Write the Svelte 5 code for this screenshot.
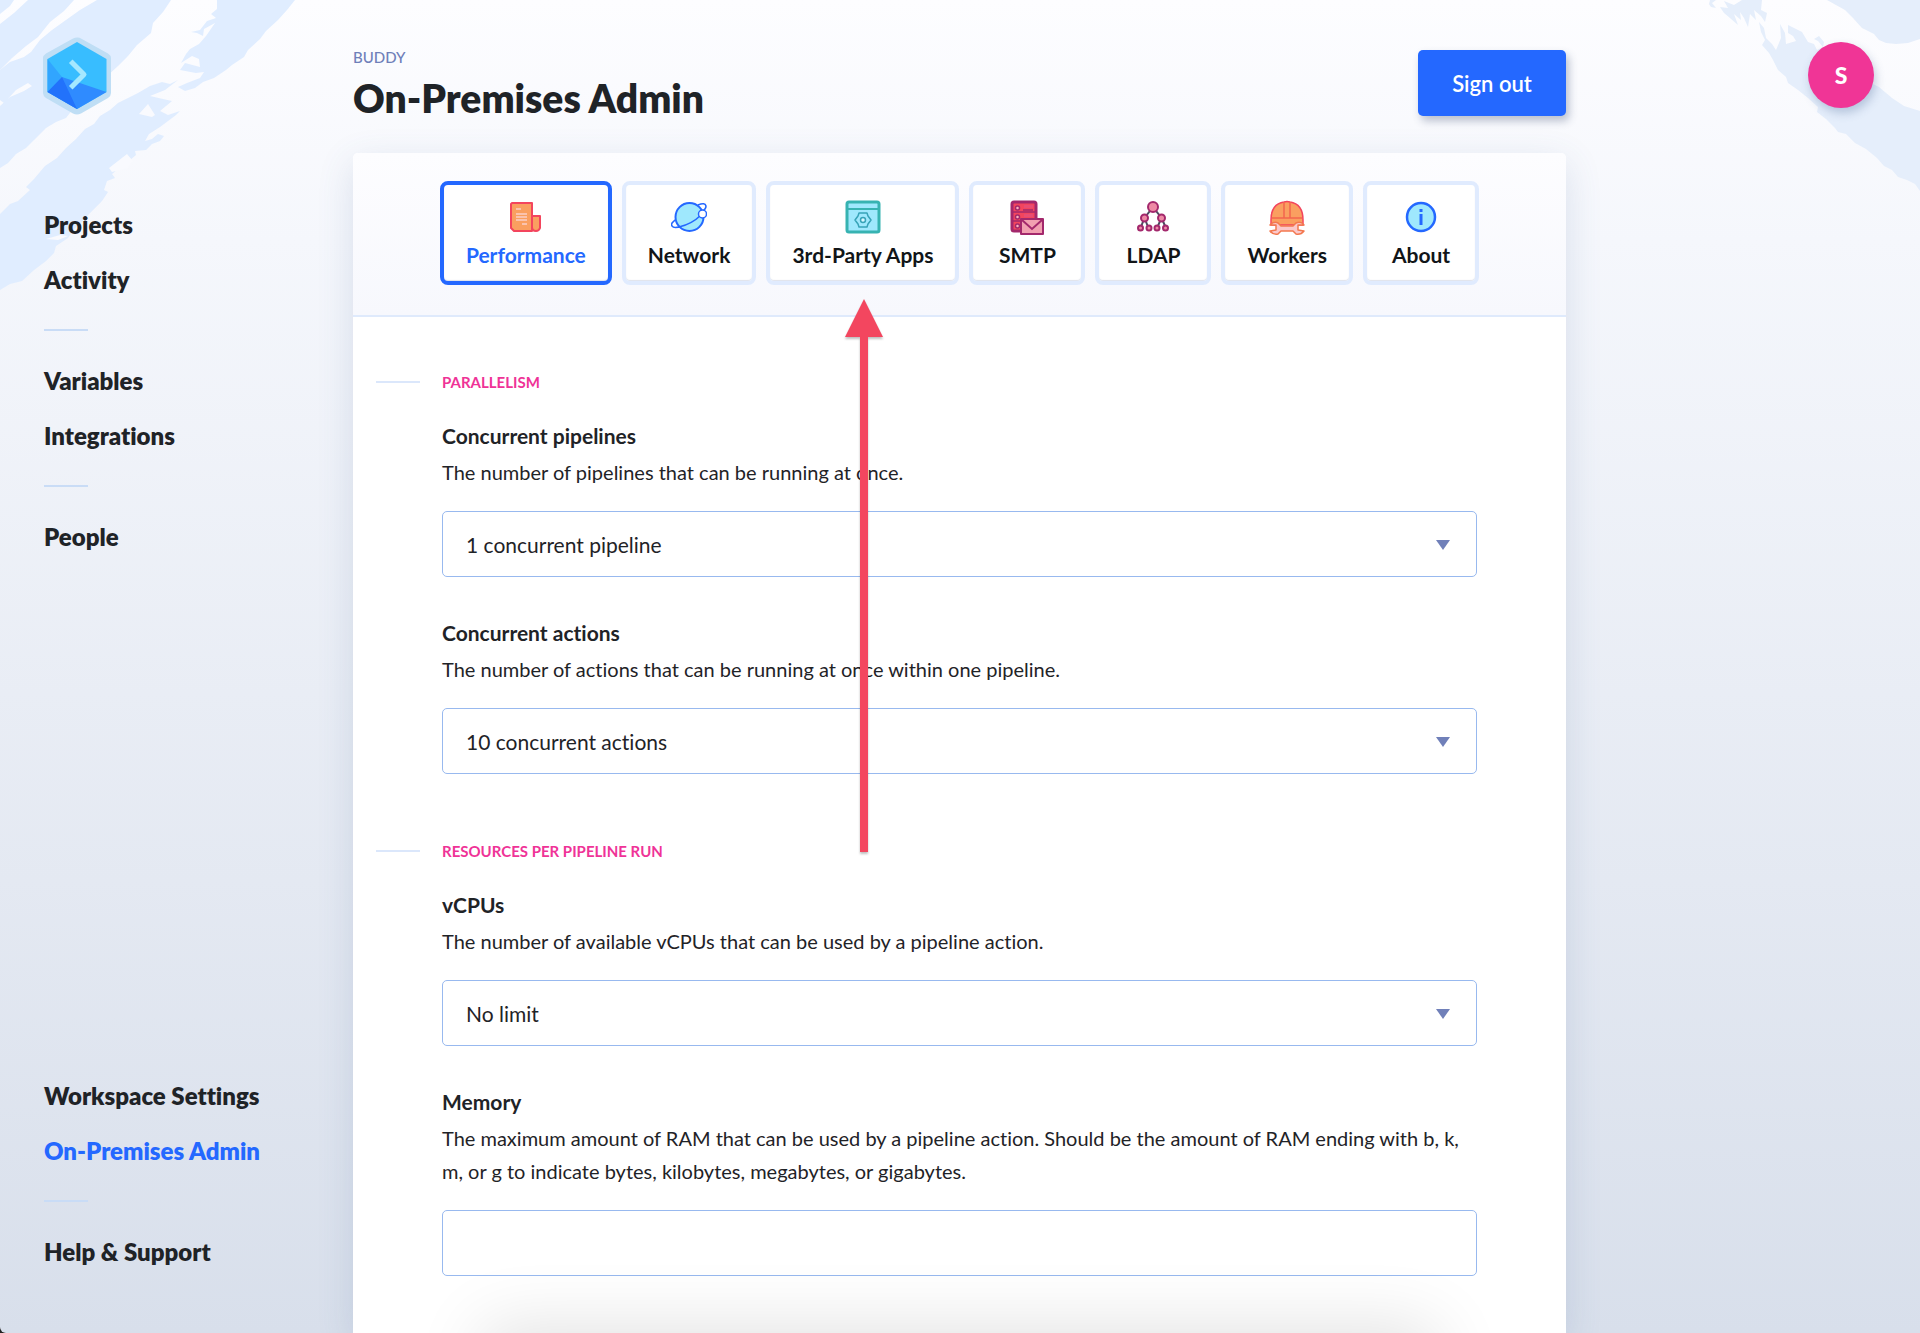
<script>
	const mainLinks = [
		['Projects', 'Activity'],
		['Variables', 'Integrations'],
		['People'],
	];

	const footLinks = [
		['Workspace Settings', 'On-Premises Admin'],
		['Help & Support'],
	];

	const tabs = ['Performance', 'Network', '3rd-Party Apps', 'SMTP', 'LDAP', 'Workers', 'About'];

	const sections = [
		{
			title: 'Parallelism',
			fields: [
				{
					id: 'pipelines',
					label: 'Concurrent pipelines',
					hint: 'The number of pipelines that can be running at once.',
					options: ['1 concurrent pipeline', '2 concurrent pipelines', '5 concurrent pipelines'],
				},
				{
					id: 'actions',
					label: 'Concurrent actions',
					hint: 'The number of actions that can be running at once within one pipeline.',
					options: ['10 concurrent actions', '20 concurrent actions'],
				},
			],
		},
		{
			title: 'Resources per pipeline run',
			fields: [
				{
					id: 'vcpus',
					label: 'vCPUs',
					hint: 'The number of available vCPUs that can be used by a pipeline action.',
					options: ['No limit', '1', '2', '4'],
				},
				{
					id: 'memory',
					label: 'Memory',
					hint: 'The maximum amount of RAM that can be used by a pipeline action. Should be the amount of RAM ending with b, k, m, or g to indicate bytes, kilobytes, megabytes, or gigabytes.',
				},
			],
		},
	];

	let activeLink = 'On-Premises Admin';
	let activeTab = 'Performance';
	let memory = '';
</script>

<div class="page">
	<svg class="brush left" viewBox="0 0 300 300" aria-hidden="true">
		<path d="M0 0H14L10 6L0 14Z" />
		<path d="M28 0H74L64 11L50 22L38 37L26 46L12 58L0 70V24L14 13Z" />
		<path d="M97 0H171L163 12L153 23L151 33L137 45L128 56L118 66L105 78L92 88L84 98L73 109L66 118L56 122L46 128L34 140L26 148L16 154L8 163L0 168V106L10 97L24 91L32 86L28 83L16 90L4 103L0 100V70L10 62L24 57L31 52L40 40L52 30L66 20L80 10Z" />
		<path d="M217 0H295L287 10L278 20L266 31L260 39L248 50L244 57L232 65L226 70L214 78L203 82L195 88L185 91L178 87L187 83L200 78L204 72L196 73L180 70L185 63L200 67L199 59L192 56L181 63L186 54L190 49L199 44L206 36L215 23L204 29L203 36L197 33L191 32L200 30L207 21L216 18L211 14L217 9Z" />
		<path d="M178 80L170 84L162 82L150 86L138 93L126 99L118 103L110 110L100 116L94 124L85 129L76 139L66 148L57 158L45 166L34 179L26 187L30 190L18 201L10 204L0 214V290L10 284L22 281L34 270L46 261L54 253L56 246L68 238L74 229L82 222L90 213L102 201L108 192L104 190L107 181L115 178L112 174L118 169L130 160L136 155L135 151L146 150L152 144L160 141L164 136L158 134L152 139L145 141L149 134L160 127L176 115L180 111L168 115L160 111L172 101L163 99L150 96L165 90Z" />
		<path class="gap" d="M148 104L155 115L152 117L139 114ZM127 154L133 161L128 168L112 172L109 168ZM46 239L60 235L68 236L58 240Z" />
	</svg>

	<svg class="brush right" viewBox="0 0 216 200" aria-hidden="true">
		<path d="M123 0H216V39L204 43L192 44L182 43L175 40L170 34L158 28L149 18L141 10L132 5Z" />
		<path d="M38 0H58L57 10L63 13L61 22L57 16L50 10L52 20L46 14L44 27L40 18L36 12L37 20L30 14L34 25L26 18L20 13L16 7L24 8L20 1L30 5ZM6 0H12L8 3L12 8L7 7L5 4Z" />
		<path d="M55 22L60 28L62 38L68 44L72 50L77 38L76 24L81 33L82 44L92 41L89 36L84 33V25L98 32L104 42L110 44L113 50L119 47L114 41L110 39L115 36L120 42L118 51L130 62L150 75L175 87L188 98L200 106L216 111V191L211 184L203 180L194 177L188 170L180 166L173 158L162 149L151 143L142 134L134 132L131 128L122 119L113 112L114 107L104 98L94 90L84 83L82 77L74 70L69 60L65 53L58 45L61 40L57 32Z" />
	</svg>

	<aside class="sidebar">
		<a class="logo" href="#home" aria-label="Buddy">
			<svg viewBox="0 0 70 80">
				<path d="M35 1.500Q37 1 39 2.500L66 17.500Q69 19.500 69 22V57Q69 60 66 62L39 77.500Q35 79.500 31 77.500L4 62Q1 60 1 57V22Q1 19.500 4 17.500L31 2.500Q33 1.500 35 1.500Z" fill="#bfdef5" />
				<path d="M35 6L64.500 23V56L35 73L5.500 56V23Z" fill="#38bdff" />
				<path d="M5.500 23L20 41L5.500 56Z" fill="#31a5ff" />
				<path d="M20 41L64.500 56L35 73L5.500 56Z" fill="#2f8bff" />
				<path d="M20 41L35 73L5.500 56Z" fill="#2272fb" />
				<path d="M30.500 27L42 38.500L30.500 50" fill="none" stroke="#a5e8ff" stroke-width="5" stroke-linecap="square" stroke-linejoin="round" />
			</svg>
		</a>

		<nav class="menu" aria-label="Workspace">
			{#each mainLinks as group}
				<ul>
					{#each group as link}
						<li><a href="#{link}" class:active={link === activeLink}>{link}</a></li>
					{/each}
				</ul>
			{/each}
		</nav>

		<nav class="menu foot" aria-label="Settings">
			{#each footLinks as group}
				<ul>
					{#each group as link}
						<li><a href="#{link}" class:active={link === activeLink}>{link}</a></li>
					{/each}
				</ul>
			{/each}
		</nav>
	</aside>

	<main>
		<header>
			<div>
				<p class="crumb">BUDDY</p>
				<h1>On-Premises Admin</h1>
			</div>
			<button class="signout">Sign out</button>
		</header>

		<div class="card">
			<nav class="tabs" aria-label="On-Premises sections">
				{#each tabs as tab}
					<button class="tab" class:active={tab === activeTab} on:click={() => activeTab = tab}>
						<svg viewBox="0 0 36 36" aria-hidden="true">
							{#if tab === 'Performance'}
								<path d="M4 3H24V31H6L3 28V4Z" fill="#fa9f60" stroke="#f3455d" stroke-width="2" stroke-linejoin="round" />
								<path d="M24 16H32V28Q31 31 28 31Q24 31 24 27Z" fill="#fa9f60" stroke="#f3455d" stroke-width="2" stroke-linejoin="round" />
								<path d="M8 9H13M8 14H19M8 17H19M8 20H19M14 24H19" stroke="#fbd0c8" stroke-width="1.500" />
							{:else if tab === 'Network'}
								<path d="M6 19Q-1 23 1 26Q3 29 11 26M27 5Q34 2 35 6Q35 9 32 11" fill="#fff" stroke="#2468ff" stroke-width="1.500" />
								<circle cx="18.500" cy="17" r="14" fill="#9fe8fd" stroke="#2468ff" stroke-width="2" />
								<path d="M8 27Q21 24 30 15" fill="none" stroke="#2468ff" stroke-width="1.500" />
								<circle cx="31.500" cy="14" r="4" fill="#fff" stroke="#2468ff" stroke-width="1.500" />
							{:else if tab === '3rd-Party Apps'}
								<rect x="2" y="2" width="32" height="30" rx="2" fill="#9fe8fd" stroke="#37b3b2" stroke-width="3" />
								<path d="M3 9H33" stroke="#37b3b2" stroke-width="2" />
								<path d="M14 13H22L23 16L26 20L23 24L22 27H14L13 24L10 20L13 16Z" fill="none" stroke="#37a3b8" stroke-width="1.500" stroke-linejoin="round" />
								<circle cx="18" cy="20" r="2.500" fill="#d8f8ff" stroke="#37a3b8" stroke-width="1.500" />
							{:else if tab === 'SMTP'}
								<rect x="3" y="2" width="24" height="29" rx="2" fill="#f3455d" stroke="#a3286c" stroke-width="3" />
								<path d="M3 12H27M3 21H27M14 10H24M14 19H24" stroke="#a3286c" stroke-width="1.500" />
								<path d="M15 5H24V8H15ZM15 14H24V17H15Z" fill="#e94c74" />
								<g fill="#fbb3bd" stroke="#a3286c" stroke-width="1.500">
									<circle cx="8.500" cy="8" r="2" />
									<circle cx="8.500" cy="17" r="2" />
									<circle cx="8.500" cy="26" r="2" />
								</g>
								<path d="M12 19H34V34H12Z" fill="#f1a0b1" stroke="#a3286c" stroke-width="2" stroke-linejoin="round" />
								<path d="M13 20L23 29L33 20" fill="none" stroke="#a3286c" stroke-width="2" />
							{:else if tab === 'LDAP'}
								<path d="M18 7L9.500 18L5.500 28M9.500 18L13.500 28M18 7L26.500 18L22 28M26.500 18L31 28" fill="none" stroke="#4d4b60" stroke-width="2" />
								<g fill="#ee8aa5" stroke="#a3286c" stroke-width="2">
									<circle cx="18" cy="7" r="5" />
									<circle cx="9.500" cy="18" r="3.500" />
									<circle cx="26.500" cy="18" r="3.500" />
									<circle cx="5.500" cy="28" r="2.500" />
									<circle cx="14" cy="28" r="2.500" />
									<circle cx="22" cy="28" r="2.500" />
									<circle cx="30.500" cy="28" r="2.500" />
								</g>
							{:else if tab === 'Workers'}
								<path d="M2 25V20Q2 4 15 2Q18 1 21 2Q34 4 34 20V25Z" fill="#fa9f60" stroke="#f3455d" stroke-width="1.500" />
								<path d="M3 18H33M15 2V18M21 2V18" stroke="#f3654d" stroke-width="1.500" />
								<path d="M1 25L7 25V30L1 31Q4 35 9 34L12 31H24L27 34Q32 35 35 31L29 30V25L35 25Q32 21 27 23L24 26H12L9 23Q5 21 1 25Z" fill="#fbc8cb" stroke="#f3784f" stroke-width="1.500" stroke-linejoin="round" />
							{:else}
								<circle cx="18" cy="17" r="14" fill="#9fe8fd" stroke="#2468ff" stroke-width="2.500" />
								<path d="M18 9V12M18 14V25" fill="none" stroke="#2468ff" stroke-width="3" />
							{/if}
						</svg>
						{tab}
					</button>
				{/each}
			</nav>

			<form>
				{#each sections as section}
					<section>
						<h2>{section.title}</h2>
						{#each section.fields as field}
							<div class="field">
								<label for={field.id}>{field.label}</label>
								<p>{field.hint}</p>
								{#if field.options}
									<div class="select">
										<select id={field.id}>
											{#each field.options as option}
												<option>{option}</option>
											{/each}
										</select>
										<svg viewBox="0 0 14 10" aria-hidden="true"><path d="M0 0H14L7 10Z" /></svg>
									</div>
								{:else}
									<input id={field.id} type="text" bind:value={memory} />
								{/if}
							</div>
						{/each}
					</section>
				{/each}
			</form>

			<!-- points at the 3rd-Party Apps tab -->
			<svg class="arrow" viewBox="0 0 38 554" aria-hidden="true">
				<path d="M19 0L38 38H23V553H15V38H0Z" />
			</svg>
		</div>

		<div class="savebar"></div>
	</main>

	<div class="account">
		<button class="avatar" aria-label="Account">S</button>
	</div>
</div>

<style>
	:global(body) {
		background: #222;
	}
	.page {
		position: relative;
		display: grid;
		grid-template-columns: 353px minmax(0, 1fr) 354px;
		grid-template-rows: 100vh;
		height: 100vh;
		overflow: hidden;
		border-bottom-left-radius: 6px;
		background: linear-gradient(#fdfdff, #f5f7fc 18%, #d8dfeb);
		color: #1f2327;
		font-family: Lato, "Liberation Sans", sans-serif;
		font-size: 21px;
		font-variant-ligatures: none;
	}
	.brush {
		position: absolute;
		top: 0;
		fill: #e0edff;
	}
	.brush.left {
		left: 0;
		width: 300px;
	}
	.brush.right {
		right: 0;
		width: 216px;
		fill: #e5eefb;
	}
	.brush .gap {
		fill: #f9fafe;
	}

	.sidebar {
		position: relative;
		display: flex;
		flex-direction: column;
		box-sizing: border-box;
		padding: 36px 44px 54px;
	}
	.logo {
		width: 70px;
		height: 80px;
		margin-left: -2px;
	}
	.menu {
		margin-top: 81px;
	}
	.menu.foot {
		margin-top: auto;
	}
	.menu ul {
		margin: 0;
		padding: 0;
		list-style: none;
	}
	.menu ul + ul::before {
		content: "";
		display: block;
		width: 44px;
		height: 2px;
		margin: 22px 0;
		background: #c9dcf6;
	}
	.menu a {
		display: block;
		color: #1f2327;
		font-size: 24px;
		font-weight: 800;
		line-height: 55px;
		text-decoration: none;
		white-space: nowrap;
	}
	.menu a.active {
		color: #2468ff;
	}

	main {
		position: relative;
		display: flex;
		flex-direction: column;
	}
	header {
		display: flex;
		flex-shrink: 0;
		align-items: flex-start;
		justify-content: space-between;
		height: 103px;
		padding-top: 50px;
	}
	.crumb {
		margin: 0 0 6px;
		color: #6f7fb9;
		font-size: 15px;
		font-weight: 500;
		line-height: 14px;
	}
	h1 {
		margin: 0;
		font-size: 39px;
		font-weight: 800;
		line-height: 56px;
	}
	.signout {
		width: 148px;
		height: 66px;
		border: 0;
		border-radius: 5px;
		background: #2468ff;
		box-shadow: 3px 5px 8px rgba(40, 60, 100, 0.3);
		color: #fff;
		font: 600 22px Lato, sans-serif;
	}

	.card {
		position: relative;
		flex: 1 0 auto;
		border-radius: 5px 5px 0 0;
		background: #fff;
		box-shadow: 0 10px 36px rgba(70, 100, 150, 0.16);
	}
	.tabs {
		display: flex;
		justify-content: center;
		gap: 10px;
		padding: 28px 0 30px;
		border-bottom: 2px solid #dfeafc;
		border-radius: 5px 5px 0 0;
		background: linear-gradient(#fdfdff, #f7f8fd);
	}
	.tab {
		display: flex;
		flex-direction: column;
		align-items: center;
		gap: 6px;
		min-width: 116px;
		height: 104px;
		padding: 15px 22px 0;
		border: 4px solid #e0ebfe;
		border-radius: 8px;
		background: #fff;
		box-shadow: inset 0 -1px 1px rgba(40, 60, 120, 0.15);
		color: #111518;
		font: 700 21px/26px Lato, sans-serif;
	}
	.tab.active {
		border-color: #2468ff;
		color: #2468ff;
	}
	.tab svg {
		width: 36px;
		height: 36px;
	}

	form {
		padding: 51px 89px 60px;
	}
	h2 {
		position: relative;
		margin: 0 0 27px;
		color: #ef3397;
		font-size: 15px;
		font-weight: 700;
		line-height: 28px;
		text-transform: uppercase;
	}
	h2::before {
		content: "";
		position: absolute;
		top: 13px;
		left: -66px;
		width: 44px;
		height: 2px;
		background: #dbe7fb;
	}
	section + section {
		margin-top: 63px;
	}
	.field + .field {
		margin-top: 43px;
	}
	label {
		display: block;
		font-weight: 700;
		line-height: 26px;
	}
	.field p {
		margin: 7px 0 22px;
		font-size: 20px;
		line-height: 33px;
	}
	select,
	input {
		display: block;
		box-sizing: border-box;
		width: 100%;
		height: 66px;
		padding: 0 23px;
		border: 1px solid #98b9ef;
		border-radius: 5px;
		background: #fff;
		color: #1f2327;
		font: 21px Lato, sans-serif;
		font-variant-ligatures: none;
		appearance: none;
	}
	.select {
		position: relative;
	}
	.select svg {
		position: absolute;
		top: 29px;
		right: 27px;
		width: 14px;
		height: 10px;
		fill: #7080b9;
		pointer-events: none;
	}

	.arrow {
		position: absolute;
		top: 146px;
		left: 492px;
		width: 38px;
		height: 554px;
		overflow: visible;
		fill: #f3465f;
		filter: drop-shadow(0 2px 1px rgba(0, 0, 0, 0.25));
		pointer-events: none;
	}

	/* parked under the window edge, only its shadow shows */
	.savebar {
		position: absolute;
		right: 140px;
		bottom: -70px;
		left: 140px;
		height: 66px;
		box-shadow: 0 0 70px 10px rgba(0, 0, 0, 0.12);
		pointer-events: none;
	}

	.account {
		position: relative;
		display: flex;
		justify-content: flex-end;
		padding: 42px 46px;
	}
	.avatar {
		width: 66px;
		height: 66px;
		padding: 0;
		border: 0;
		border-radius: 50%;
		background: #f03596;
		box-shadow: 2px 5px 10px rgba(70, 100, 150, 0.3);
		color: #fff;
		font: 900 23px Lato, sans-serif;
	}
</style>
